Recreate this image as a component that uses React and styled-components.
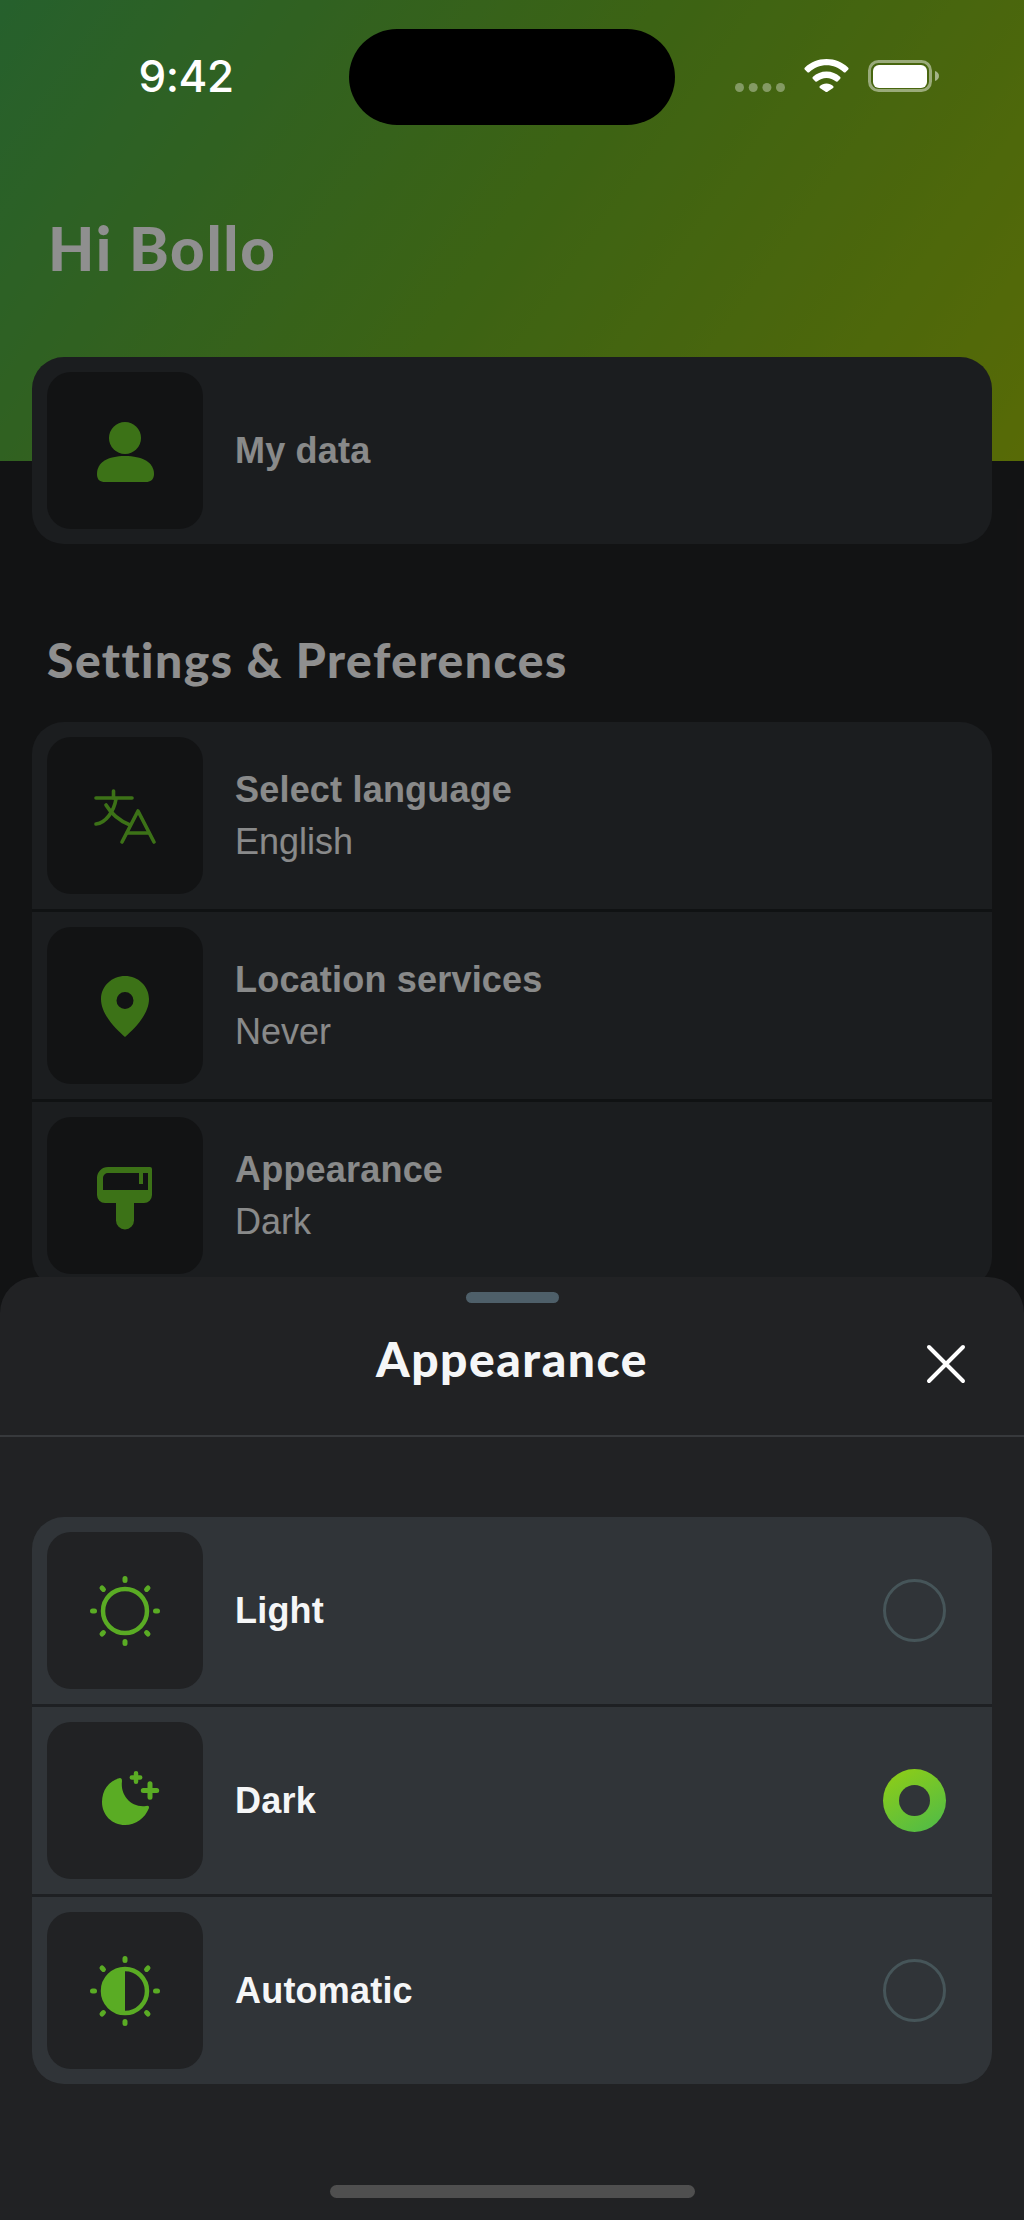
import styled, { createGlobalStyle } from "styled-components";

const GlobalStyle = createGlobalStyle`
    html, body {
        margin: 0;
        padding: 0;
        background: #212224;
    }

    * {
        box-sizing: border-box;
    }
`

const Screen = styled.div`
    position: relative;
    width: 1024px;
    height: 2220px;
    overflow: hidden;
    background: #212224;
    font-family: "Liberation Sans", Arial, sans-serif;
`

const Hero = styled.header`
    height: 461px;
    background: linear-gradient(125deg, #44ac50 0%, #6cb024 50%, #9cbe0c 100%);
`

const StatusBar = styled.div`
    position: relative;
    z-index: 2;
    display: flex;
    align-items: center;
    padding-top: 29px;
    color: #fff;
`

const Clock = styled.div`
    width: 349px;
    padding: 0 0 2px 23px;
    text-align: center;
    font-family: Inter, sans-serif;
    font-size: 44px;
    font-weight: 500;
    letter-spacing: -0.5px;
`

const Island = styled.div`
    width: 326px;
    height: 96px;
    border-radius: 48px;
    background: #000;
`

const StatusIcons = styled.div`
    display: flex;
    align-items: center;
    gap: 19px;
    padding: 0 0 3px 60px;
`

const Greeting = styled.h1`
    margin: 0;
    padding: 88px 0 0 48px;
    color: #fff;
    font-family: Lato, sans-serif;
    font-size: 60px;
    font-weight: 900;
    line-height: 70px;
    letter-spacing: 1.7px;
`

const Content = styled.main`
    margin-top: -104px;
    padding: 0 32px;
`

const Card = styled.section`
    overflow: hidden;
    border-radius: 32px;
    background: #303438;
`

const Row = styled.div`
    display: flex;
    align-items: center;
    gap: 32px;
    padding: 15px 46px 15px 15px;

    & + & {
        border-top: 3px solid #1e2023;
    }
`

const IconBox = styled.div`
    flex: none;
    display: flex;
    align-items: center;
    justify-content: center;
    width: 156px;
    height: 157px;
    border-radius: 24px;
    background: #212224;
    color: ${props => props.$tone};
`

const RowText = styled.div`
    flex: 1;
    color: #f5f6f7;
    font-size: 36px;
    line-height: 51px;
`

const RowTitle = styled.div`
    font-weight: 700;
    letter-spacing: 0.2px;
`

const RowValue = styled.div`
    margin-top: 1px;
    font-weight: 400;
`

const SectionTitle = styled.h2`
    margin: 0;
    padding: 86px 15px 32px;
    color: #fff;
    font-family: Lato, sans-serif;
    font-size: 48px;
    font-weight: 900;
    line-height: 60px;
    letter-spacing: 1.5px;
`

const Scrim = styled.div`
    position: absolute;
    inset: 0;
    z-index: 1;
    background: rgba(0, 0, 0, 0.44);
`

const Sheet = styled.aside`
    position: absolute;
    top: 1277px;
    left: 0;
    right: 0;
    bottom: 0;
    z-index: 3;
    display: flex;
    flex-direction: column;
    align-items: stretch;
    border-radius: 36px 36px 0 0;
    background: #212224;
`

const Handle = styled.div`
    align-self: center;
    flex: none;
    width: 93px;
    height: 11px;
    margin-top: 15px;
    border-radius: 6px;
    background: #4e5f69;
`

const SheetHeader = styled.div`
    display: grid;
    grid-template-columns: 1fr auto 1fr;
    align-items: center;
    height: 134px;
    padding: 0 55px 22px;
    border-bottom: 2px solid #37393c;
    color: #f5f6f7;
`

const SheetTitle = styled.h2`
    grid-column: 2;
    margin: 0;
    font-family: Lato, sans-serif;
    font-size: 48px;
    font-weight: 900;
    letter-spacing: 1.5px;
`

const CloseButton = styled.button`
    grid-column: 3;
    justify-self: end;
    display: flex;
    width: 46px;
    height: 46px;
    margin-top: 12px;
    padding: 0;
    border: 0;
    background: none;
    color: #fff;
`

const SheetBody = styled.div`
    padding: 80px 32px 0;
`

const Radio = styled.span`
    flex: none;
    width: 63px;
    height: 63px;
    border-radius: 50%;
    border: 3px solid #465559;
`

const RadioOn = styled.span`
    flex: none;
    display: flex;
    align-items: center;
    justify-content: center;
    width: 63px;
    height: 63px;
    border-radius: 50%;
    background: linear-gradient(150deg, #92ce14, #4cba4a);

    &::after {
        content: "";
        width: 31px;
        height: 31px;
        border-radius: 50%;
        background: #303438;
    }
`

const HomeBar = styled.div`
    align-self: center;
    width: 365px;
    height: 13px;
    margin-top: 101px;
    border-radius: 7px;
    background: #4f4f4f;
`

const Glyph = ({ children, size = 110 }) => (
    <svg width={size} height={size} viewBox="0 0 110 110" fill="currentColor">
        {children}
    </svg>
)

const SignalDots = () => (
    <svg width="50" height="32" viewBox="0 0 50 32" fill="#fff" fillOpacity="0.35">
        <circle cx="4.5" cy="27.5" r="4.5" />
        <circle cx="18.2" cy="27.5" r="4.5" />
        <circle cx="31.9" cy="27.5" r="4.5" />
        <circle cx="45.5" cy="27.5" r="4.5" />
    </svg>
)

const WifiIcon = () => (
    <svg width="45" height="33" viewBox="0 0 45 33" fill="#fff">
        <path d="M22.5 0C14 0 6.5 3.2 1 8.5c-.8.7-.8 1.6 0 2.3l2.2 2.2c.7.7 1.6.7 2.3 0C10 8.800 16 6.300 22.500 6.300S35 8.800 39.500 13c.7.7 1.600.7 2.300 0L44 10.800c.8-.7.8-1.600 0-2.300C38.500 3.200 31 0 22.500 0Z" />
        <path d="M22.500 12.500c-5.300 0-10 2-13.500 5.300-.7.7-.7 1.500 0 2.200l2.200 2.200c.7.700 1.500.700 2.200.1 2.400-2.100 5.500-3.400 9.100-3.400s6.700 1.300 9.100 3.400c.7.600 1.500.600 2.200-.1L36 20c.7-.7.7-1.500 0-2.200-3.500-3.300-8.200-5.300-13.500-5.300Z" />
        <path d="M22.500 24.500c-2.600 0-5 1-6.600 2.600-.6.600-.6 1.200 0 1.800l5.300 3.500c.8.800 1.800.800 2.600 0l5.300-3.500c.6-.6.6-1.200 0-1.800-1.600-1.600-4-2.600-6.600-2.600Z" />
    </svg>
)

const BatteryIcon = () => (
    <svg width="71" height="32" viewBox="0 0 71 32">
        <rect x="1.500" y="1.500" width="61" height="29" rx="9" fill="none" stroke="#fff" strokeOpacity="0.45" strokeWidth="3" />
        <rect x="5" y="5" width="54" height="23" rx="6" fill="#fff" />
        <path d="M67 11c2.500.8 4 2.700 4 5s-1.500 4.200-4 5Z" fill="#fff" fillOpacity="0.5" />
    </svg>
)

const UserIcon = () => (
    <Glyph>
        <ellipse cx="55" cy="42" rx="16" ry="16" />
        <path d="M27 78C27 66 38 60 55 60C72 60 84 66 84 78C84 84 80 86 76 86H35C30 86 27 84 27 78Z" />
    </Glyph>
)

const TranslateIcon = () => (
    <Glyph>
        <g fill="none" stroke="currentColor" strokeWidth="3.600" strokeLinecap="round" strokeLinejoin="round">
            <path d="M26 37H62" />
            <path d="M43.500 30V37" />
            <path d="M46 38C44 50 36 62 26 63" />
            <path d="M36 44C42 54 50 60 60 64" />
            <path d="M52 81L68 50L84 81" />
            <path d="M57 72H78" />
        </g>
    </Glyph>
)

const PinIcon = () => (
    <Glyph>
        <path
            fillRule="evenodd"
            d="M55 25C42 25 31 35 31 48C31 64 47 79 55 86C63 79 79 64 79 48C79 35 68 25 55 25ZM55 41A8.500 8.500 0 1 1 55 58A8.500 8.500 0 1 1 55 41Z"
        />
    </Glyph>
)

const BrushIcon = () => (
    <Glyph>
        <path
            fillRule="evenodd"
            d="M38 26H80a2 2 0 0 1 2 2V54a8 8 0 0 1-8 8H64V79.500a9 9 0 0 1-18 0V62H35a8 8 0 0 1-8-8V37a11 11 0 0 1 11-11ZM38 32a5 5 0 0 0-5 5V49H78V32H73V43H69V32Z"
        />
    </Glyph>
)

const rays = [0, 45, 90, 135, 180, 225, 270, 315]

const SunRays = () => (
    <g stroke="currentColor" strokeWidth="5" strokeLinecap="round">
        {rays.map(angle => (
            <line key={angle} x1="55" y1="22.500" x2="55" y2="24.500" transform={`rotate(${angle} 55 55)`} />
        ))}
    </g>
)

const SunIcon = () => (
    <Glyph>
        <SunRays />
        <circle cx="55" cy="55" r="22" fill="none" stroke="currentColor" strokeWidth="4.500" />
    </Glyph>
)

const MoonIcon = () => (
    <Glyph>
        <path d="M50 32C38 35 32 45 32 56C32 69 42 79 55 79C66 79 75 72 79 62Q79.500 59 76 60C62 62 50 50 52 35Q52 32 50 32Z" />
        <g stroke="currentColor" strokeLinecap="round">
            <path strokeWidth="4.500" d="M66 27.300V35.700M61.800 31.500H70.200" />
            <path strokeWidth="5" d="M80 37.800V51.200M73.300 44.500H86.700" />
        </g>
    </Glyph>
)

const AutoIcon = () => (
    <Glyph>
        <SunRays />
        <circle cx="55" cy="55" r="22" fill="none" stroke="currentColor" strokeWidth="4.500" />
        <path d="M55 33A22 22 0 0 0 55 77Z" />
    </Glyph>
)

const CloseIcon = () => (
    <svg width="46" height="46" viewBox="0 0 46 46" fill="none" stroke="currentColor" strokeWidth="4" strokeLinecap="round">
        <path d="M6 6L40 40M40 6L6 40" />
    </svg>
)

const dimmedGreen = "#6ccb2a"
const sheetGreen = "#5aac24"

const settings = [
    { title: "Select language", value: "English", Icon: TranslateIcon },
    { title: "Location services", value: "Never", Icon: PinIcon },
    { title: "Appearance", value: "Dark", Icon: BrushIcon },
]

const themes = [
    { title: "Light", Icon: SunIcon, selected: false },
    { title: "Dark", Icon: MoonIcon, selected: true },
    { title: "Automatic", Icon: AutoIcon, selected: false },
]

const App = () => {
    return (
        <Screen>
            <GlobalStyle />
            <Hero>
                <StatusBar>
                    <Clock>9:42</Clock>
                    <Island />
                    <StatusIcons>
                        <SignalDots />
                        <WifiIcon />
                        <BatteryIcon />
                    </StatusIcons>
                </StatusBar>
                <Greeting>Hi Bollo</Greeting>
            </Hero>
            <Content>
                <Card>
                    <Row>
                        <IconBox $tone={dimmedGreen}><UserIcon /></IconBox>
                        <RowText><RowTitle>My data</RowTitle></RowText>
                    </Row>
                </Card>
                <SectionTitle>Settings &amp; Preferences</SectionTitle>
                <Card>
                    {settings.map(({ title, value, Icon }) => (
                        <Row key={title}>
                            <IconBox $tone={dimmedGreen}><Icon /></IconBox>
                            <RowText>
                                <RowTitle>{title}</RowTitle>
                                <RowValue>{value}</RowValue>
                            </RowText>
                        </Row>
                    ))}
                </Card>
            </Content>
            <Scrim />
            <Sheet>
                <Handle />
                <SheetHeader>
                    <SheetTitle>Appearance</SheetTitle>
                    <CloseButton aria-label="Close"><CloseIcon /></CloseButton>
                </SheetHeader>
                <SheetBody>
                    <Card>
                        {themes.map(({ title, Icon, selected }) => (
                            <Row key={title}>
                                <IconBox $tone={sheetGreen}><Icon /></IconBox>
                                <RowText><RowTitle>{title}</RowTitle></RowText>
                                {selected ? <RadioOn /> : <Radio />}
                            </Row>
                        ))}
                    </Card>
                </SheetBody>
                <HomeBar />
            </Sheet>
        </Screen>
    )
}

export default App;
